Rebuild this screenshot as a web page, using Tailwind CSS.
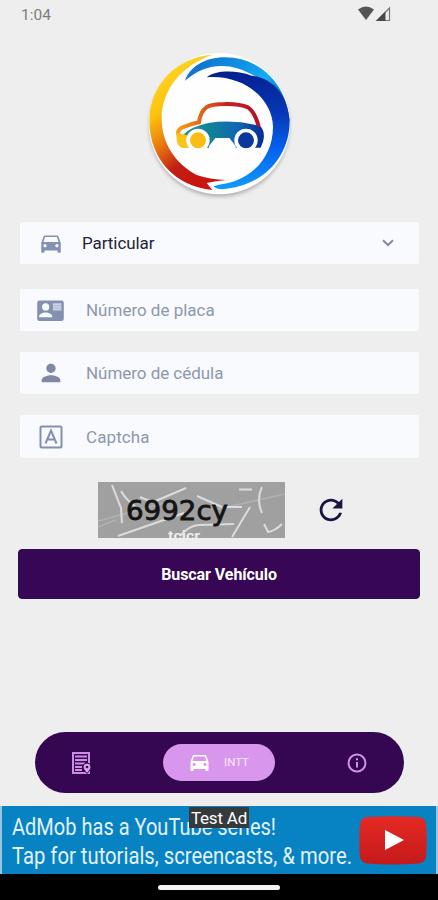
<!DOCTYPE html>
<html lang="es">
<head>
<meta charset="utf-8">
<title>INTT</title>
<script src="https://cdn.jsdelivr.net/npm/@tailwindcss/browser@4"></script>
</head>
<body class="bg-[#eeeeee]">
<div class="w-[438px] h-[900px] overflow-hidden flex flex-col bg-[#eeeeee] font-['Roboto',sans-serif]">
  <!-- Status bar -->
  <header class="h-[45px] shrink-0 flex items-start justify-between pl-[21px] pr-[47px] pt-[6px]">
    <span class="text-[15.5px] leading-[18px] text-[#7d7d7d]">1:04</span>
    <svg class="w-[34px] h-[16px]" viewBox="0 0 34 16">
      <path d="M1 3.5Q9 -2.300 17 3.500L9 14Z" fill="#555"/>
      <path d="M20 14.500L32.500 2V14.500Z" fill="none" stroke="#777" stroke-width="1.200"/>
      <path d="M19 15L28.500 5.500V15Z" fill="#484848"/>
    </svg>
  </header>

  <!-- Logo -->
  <div class="h-[160px] shrink-0 flex justify-center">
    <svg class="w-[160px] h-[160px] mr-[-2px]" viewBox="0 0 480 480">
      <defs>
        <linearGradient id="warm" x1="0" y1="0" x2="0.450" y2="1">
          <stop offset="0" stop-color="#ffe13a"/><stop offset=".4" stop-color="#fbc20c"/>
          <stop offset=".62" stop-color="#e8760f"/><stop offset=".82" stop-color="#c02015"/><stop offset="1" stop-color="#c8150f"/>
        </linearGradient>
        <linearGradient id="sky" x1="0" y1="0" x2="1" y2=".5">
          <stop offset="0" stop-color="#1268c4"/><stop offset=".45" stop-color="#0f90e4"/><stop offset=".75" stop-color="#14acf2"/><stop offset="1" stop-color="#0872b8"/>
        </linearGradient>
        <linearGradient id="deep" x1="0" y1="0" x2="0" y2="1">
          <stop offset="0" stop-color="#052090"/><stop offset=".35" stop-color="#0638b4"/><stop offset=".65" stop-color="#0560ee"/><stop offset="1" stop-color="#109cfb"/>
        </linearGradient>
        <linearGradient id="roof" x1="110" x2="360" y1="0" y2="0" gradientUnits="userSpaceOnUse">
          <stop offset="0" stop-color="#f5a31b"/><stop offset=".35" stop-color="#dc5a1a"/><stop offset=".6" stop-color="#c82020"/><stop offset="1" stop-color="#b01030"/>
        </linearGradient>
        <linearGradient id="body" x1="110" x2="370" y1="0" y2="0" gradientUnits="userSpaceOnUse">
          <stop offset="0" stop-color="#2f9c80"/><stop offset=".35" stop-color="#128494"/><stop offset=".7" stop-color="#1068b4"/><stop offset="1" stop-color="#082c94"/>
        </linearGradient>
        <filter id="soft" x="-10%" y="-10%" width="120%" height="125%"><feGaussianBlur stdDeviation="6"/></filter>
      </defs>
      <circle cx="238" cy="245" r="209" fill="#777" opacity=".6" filter="url(#soft)"/>
      <circle cx="238" cy="236" r="212" fill="#fefefe"/>
      <path d="M218 29C110 36 28 120 28 228C28 340 105 425 217 435L200 414Q226 408 258 405Q210 403 170 390C105 355 65 295 65 220C65 135 125 60 218 29Z" fill="url(#warm)"/>
      <path d="M135 107C150 65 195 37 255 37C360 38 440 115 449 230C425 160 385 112 340 91C275 52 200 50 135 107Z" fill="url(#sky)"/>
      <path d="M200 97C225 76 285 74 335 92C400 100 442 150 449 225C450 340 365 425 245 433Q230 433 220 424C235 418 262 417 285 408C350 385 399 325 399 245C397 160 310 88 200 97Z" fill="url(#deep)"/>
      <path d="M130 269Q150 246 205 234Q280 222 361 243Q377 262 369 290L362 308H190Z" fill="url(#body)"/>
      <path d="M115 268Q111 256 125 248Q150 237 177 232Q181 200 199 187Q213 177 255 177Q298 176 324 187Q342 198 355 240" fill="none" stroke="url(#roof)" stroke-width="12" stroke-linecap="round"/>
      <path d="M109 264Q120 264 150 274L148 309H128Q108 305 109 264Z" fill="#fac51b"/>
      <path d="M207 312V303L226 279H268L287 303V312Z" fill="#fefefe"/>
      <circle cx="174" cy="286" r="35" fill="#fefefe"/>
      <circle cx="318" cy="286" r="35" fill="#fefefe"/>
      <circle cx="174" cy="286" r="24" fill="#fbbc14"/>
      <circle cx="318" cy="286" r="24" fill="#0c379b"/>
    </svg>
  </div>

  <!-- Form -->
  <main class="shrink-0 h-[527px] pt-[17px] pl-[20px] pr-[19px] flex flex-col text-[#8e97ae]">
    <div class="h-[42px] shrink-0 bg-[#f8fafe] rounded-[2px] flex items-center pl-[18px] pr-[24px]">
      <svg class="w-[26px] h-[26px] text-[#8490b0]" viewBox="0 0 24 24" fill="currentColor"><path d="M18.920 6.010C18.720 5.420 18.160 5 17.500 5h-11c-.660 0-1.210.420-1.420 1.010L3 12v8c0 .550.450 1 1 1h1c.550 0 1-.450 1-1v-1h12v1c0 .550.450 1 1 1h1c.550 0 1-.450 1-1v-8l-2.080-5.990zM6.500 16c-.830 0-1.500-.670-1.500-1.500S5.670 13 6.500 13s1.500.670 1.500 1.500S7.330 16 6.500 16zm11 0c-.830 0-1.500-.670-1.500-1.500s.670-1.500 1.500-1.500 1.500.670 1.500 1.500-.670 1.500-1.500 1.500zM5 11l1.500-4.500h11L19 11H5z"/></svg>
      <span class="ml-[18px] pt-[2px] text-[17px] tracking-[-0.070px] text-[#252338] flex-1">Particular</span>
      <svg class="w-[14px] h-[10px]" viewBox="0 0 14 10"><path d="M2 2.200L7 7L12 2.200" fill="none" stroke="#858aa4" stroke-width="2"/></svg>
    </div>
    <div class="mt-[25px] h-[42px] shrink-0 bg-[#f8fafe] rounded-[2px] flex items-center pl-[16px]">
      <svg class="w-[29px] h-[29px] text-[#8490b0]" viewBox="0 0 24 24"><rect x="1" y="3.800" width="22" height="16.800" rx="1.800" fill="currentColor"/><circle cx="8" cy="9" r="3" fill="#f8fafe"/><path d="M2.500 17.500c0-5 11-5 11 0z" fill="#f8fafe"/><path d="M14 6h7v6h-7z" fill="#cbd3e2"/><path d="M14 8h7M14 10h7" stroke="#a9b4ca" stroke-width=".6"/></svg>
      <span class="ml-[21px] pt-[2px] text-[17px] tracking-[-0.010px]">Número de placa</span>
    </div>
    <div class="mt-[21px] h-[42px] shrink-0 bg-[#f8fafe] rounded-[2px] flex items-center pl-[17px]">
      <svg class="w-[28px] h-[28px] text-[#8088a8]" viewBox="0 0 24 24" fill="currentColor"><path d="M12 12c2.210 0 4-1.790 4-4s-1.790-4-4-4-4 1.790-4 4 1.790 4 4 4zm0 2c-2.670 0-8 1.340-8 4v2h16v-2c0-2.660-5.330-4-8-4z"/></svg>
      <span class="ml-[21px] pt-[2px] text-[17px] tracking-[-0.040px]">Número de cédula</span>
    </div>
    <div class="mt-[21px] h-[43px] shrink-0 bg-[#f8fafe] rounded-[2px] flex items-center pl-[18px]">
      <svg class="w-[26px] h-[26px]" viewBox="0 0 26 26" fill="none" stroke="#8490b0" stroke-width="2"><rect x="2.500" y="2.500" width="21" height="21" rx="1.500"/><path d="M7.500 19.500L13 6.500L18.500 19.500M9.400 15.500H16.600"/></svg>
      <span class="ml-[22px] pt-[2px] text-[17px] tracking-[0.100px]">Captcha</span>
    </div>

    <div class="mt-[24px] h-[56px] shrink-0 pl-[78px] flex items-center">
      <svg class="w-[187px] h-[56px]" viewBox="0 0 187 56">
        <rect width="187" height="56" fill="#a0a0a0"/>
        <path d="M0 39L70 20M120 27L187 12M0 45L18 38" stroke="#b2b2b2" stroke-width="1.500" fill="none"/>
        <g fill="none" stroke="#dcdcdc" stroke-width="2">
          <path d="M14 3L23 26L24 41M23 9Q28 18 38 25M88 6L60 18Q54 21 42 15M20 54L86 31M99 14L124 25M128 25H144M152 25L134 55M141 7.500H154M164 5Q158 17 164 31M166 42L170 50Q177 49 184 42M82 54Q90 44 101 43L136 42"/>
        </g>
        <text x="70" y="58" font-family="Roboto" font-size="13" font-weight="700" fill="#ededed" textLength="32" lengthAdjust="spacingAndGlyphs">tcicr</text>
        <text x="28" y="37.500" font-family="DejaVu Sans" font-size="26" fill="#141414" stroke="#141414" stroke-width=".8" textLength="102" lengthAdjust="spacingAndGlyphs">6992cy</text>
      </svg>
      <svg class="ml-[29px] w-[34px] h-[34px]" viewBox="0 0 24 24" fill="#1c1440"><path d="M17.650 6.350C16.200 4.900 14.210 4 12 4c-4.420 0-7.990 3.580-7.990 8s3.570 8 7.990 8c3.730 0 6.840-2.550 7.730-6h-2.080c-.820 2.330-3.040 4-5.650 4-3.310 0-6-2.690-6-6s2.690-6 6-6c1.660 0 3.140.690 4.220 1.780L13 11h7V4l-2.350 2.350z"/></svg>
    </div>

    <button class="mt-[11px] -ml-[2px] -mr-[1px] h-[50px] shrink-0 rounded-[4px] bg-[#370755] border border-[#251047] text-white font-bold text-[16px] flex items-center justify-center pt-[2px] tracking-[-0.070px]"><span>Buscar Vehículo</span></button>
  </main>

  <!-- Bottom navigation -->
  <nav class="h-[61px] shrink-0 ml-[35px] mr-[34px] rounded-full bg-[#350752] flex items-center justify-between pl-[36px] pr-[36px]">
    <svg class="w-[21px] h-[24px]" viewBox="0 0 21 24">
      <rect x="2" y="2" width="16" height="20" fill="none" stroke="#cc8ce4" stroke-width="2"/>
      <path d="M4 5.500H16M4 9H16M4 12.500H14M4 16H11M4 19H11" stroke="#cc8ce4" stroke-width="1.800"/>
      <path d="M16 22.500C13 19 12 17.500 12 16a4 4 0 0 1 8 0C20 17.500 19 19 16 22.500Z" fill="#d9a0eb" stroke="#350752" stroke-width="1"/><circle cx="16" cy="16" r="1.300" fill="#350752"/>
    </svg>
    <div class="w-[112px] h-[37px] rounded-full bg-[#d896ec] flex items-center pl-[24px] text-white">
      <svg class="w-[25px] h-[24px]" viewBox="0 0 24 24" fill="currentColor"><path d="M18.920 5.010C18.720 4.420 18.160 4 17.500 4h-11c-.660 0-1.210.420-1.420 1.010L3 11v8c0 .550.450 1 1 1h1c.550 0 1-.450 1-1v-1h12v1c0 .550.450 1 1 1h1c.550 0 1-.450 1-1v-8l-2.080-5.990zM6.500 15c-.830 0-1.500-.670-1.500-1.500S5.670 12 6.500 12s1.500.670 1.500 1.500S7.330 15 6.500 15zm11 0c-.830 0-1.500-.670-1.500-1.500s.670-1.500 1.500-1.500 1.500.670 1.500 1.500-.670 1.500-1.500 1.500zM5 10l1.500-4.500h11L19 10H5z"/></svg>
      <span class="ml-[12px] pt-[1px] text-[11.500px] text-[#fbe9ff]">INTT</span>
    </div>
    <svg class="w-[22px] h-[22px]" viewBox="0 0 22 22"><circle cx="11" cy="11" r="8.500" fill="none" stroke="#cf94e4" stroke-width="2"/><path d="M11 10V15.500M11 6.200V8.200" stroke="#cf94e4" stroke-width="2"/></svg>
  </nav>

  <!-- Ad banner -->
  <section class="relative mt-[13px] h-[68px] shrink-0 bg-[#0782c3] border-l-2 border-[#9cc4de] flex items-center pl-[10px]">
    <svg class="w-[342px] h-[68px] shrink-0" viewBox="0 0 342 68" font-family="Roboto" font-size="24" fill="#e2f1fa">
      <text x="0" y="29" textLength="264" lengthAdjust="spacingAndGlyphs">AdMob has a YouTube series!</text>
      <text x="0" y="58" textLength="340" lengthAdjust="spacingAndGlyphs">Tap for tutorials, screencasts, &amp; more.</text>
    </svg>
    <svg class="ml-[5px] w-[68px] h-[49px] shrink-0" viewBox="0 0 68 49">
      <defs><linearGradient id="yt" x2="0" y2="1"><stop stop-color="#e42a24"/><stop offset="1" stop-color="#c41a1a"/></linearGradient></defs>
      <path d="M8 1Q34 -.5 60 1Q66 2 67 8Q68.500 24 67 41Q66 46 60 47.500Q34 49.500 8 47.500Q2 46 1 41Q-.5 24 1 8Q2 2 8 1Z" fill="url(#yt)"/>
      <path d="M26 14V34L45 24Z" fill="#fff"/>
    </svg>
    <span class="absolute left-[187px] top-[1px] w-[60px] h-[21px] bg-[#373a3c] text-white text-[17px] leading-[23px] text-center whitespace-nowrap tracking-[-0.200px]">Test Ad</span>
    <span class="absolute right-0 top-0 w-[2px] h-full bg-[#9cc4de]"></span>
  </section>

  <!-- Gesture bar -->
  <footer class="h-[26px] shrink-0 bg-black flex justify-center pt-[11px]"><div class="w-[122px] h-[5px] rounded-full bg-[#f4f4f4]"></div></footer>
</div>
</body>
</html>
